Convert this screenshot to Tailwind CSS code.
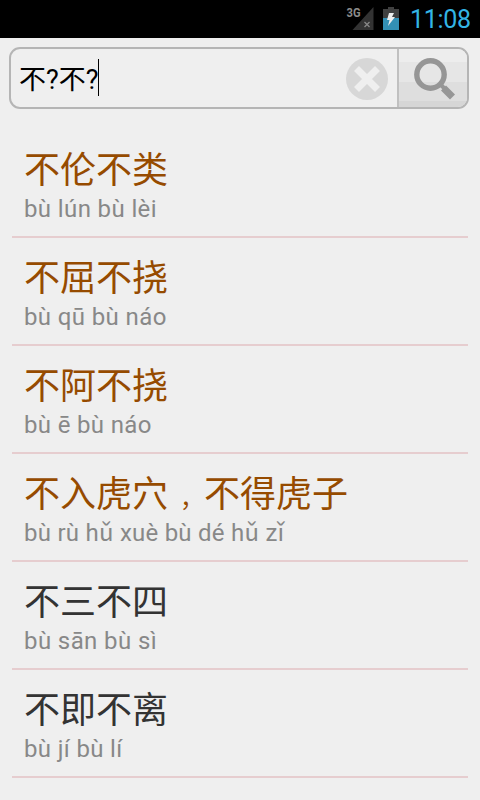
<!DOCTYPE html>
<html lang="zh-CN">
<head>
    <meta charset="UTF-8">
    <meta name="viewport" content="width=device-width, initial-scale=1.0">
    <title>成语</title>
    <script src="https://cdn.jsdelivr.net/npm/@tailwindcss/browser@4"></script>
    <style>
        body {
            font-family: Roboto, "Noto Sans CJK SC", sans-serif;
        }
    </style>
</head>
<body class="bg-[#efefef] h-[800px] overflow-hidden">
    <!-- Status bar -->
    <div class="h-[38px] bg-black flex items-center justify-end pr-[10px]">
        <svg class="w-[29px] h-[38px]" viewBox="0 0 29 38">
            <text x="1.5" y="17" font-size="13.5" font-weight="700" textLength="14" lengthAdjust="spacingAndGlyphs" fill="#8c8c8c">3G</text>
            <path d="M28.5 7V30H7.5Z" fill="#333"/>
            <path d="M19.5 22l5 5M24.5 22l-5 5" stroke="#888" stroke-width="1.3"/>
        </svg>
        <svg class="w-4 h-[38px] ml-[9px] mr-[11px]" viewBox="0 0 16 38">
            <path d="M5 7h6v2h5v9H0V9h5z" fill="#404040"/>
            <path d="M0 18h16v12H0z" fill="#3390b5"/>
            <path d="M6 13h5l-2 4h3l-7 9 1.5-6H4z" fill="#eee"/>
        </svg>
        <span class="text-[25px] leading-[38px] text-[#33b5e5] tracking-[-0.3px] w-[60px] whitespace-nowrap pt-[2px]">11:08</span>
    </div>

    <!-- Search box -->
    <div class="mt-[9px] ml-[9px] w-[460px] h-[62px] flex border-2 border-[#b5b5b5] rounded-[11px] overflow-hidden">
        <div class="flex-1 flex items-center pl-[8px] pr-[9px]">
            <span class="text-[27px] leading-[54px] text-black whitespace-nowrap pt-[3px]">不?不?</span>
            <span class="w-px h-[37px] bg-black -mt-[2px] -ml-px"></span>
            <svg class="w-[42px] h-[42px] ml-auto mt-[2px]" viewBox="0 0 42 42">
                <circle cx="21" cy="21" r="21" fill="#d7d7d7"/>
                <path d="M10.5 10.5l21 21M31.5 10.5l-21 21" stroke="#efefef" stroke-width="7"/>
            </svg>
        </div>
        <div class="w-[70px] border-l-2 border-[#c0c0c0] bg-[linear-gradient(#ededed_0_13px,#e6e6e6_13px_33px,#dedede_33px_52px,#d6d6d6_52px)]">
            <svg class="w-[68px] h-[58px]" viewBox="0 0 68 58">
                <circle cx="31.5" cy="25.5" r="13.7" fill="none" stroke="#969696" stroke-width="5.4"/>
                <path d="M41 35l5 5" stroke="#969696" stroke-width="4"/>
                <path d="M44.5 39l9 9" stroke="#969696" stroke-width="7"/>
            </svg>
        </div>
    </div>

    <!-- Results -->
    <ul class="mt-[21px] mx-3">
        <li class="h-[108px] px-3 pt-[15px] border-b-2 border-[#e6cdcf]">
            <div class="text-[36px] leading-[52px] text-[#964b00]">不伦不类</div>
            <div class="text-[24px] leading-[24px] tracking-[0.38px] text-[#888]">bù lún bù lèi</div>
        </li>
        <li class="h-[108px] px-3 pt-[15px] border-b-2 border-[#e6cdcf]">
            <div class="text-[36px] leading-[52px] text-[#964b00]">不屈不挠</div>
            <div class="text-[24px] leading-[24px] tracking-[0.38px] text-[#888]">bù qū bù náo</div>
        </li>
        <li class="h-[108px] px-3 pt-[15px] border-b-2 border-[#e6cdcf]">
            <div class="text-[36px] leading-[52px] text-[#964b00]">不阿不挠</div>
            <div class="text-[24px] leading-[24px] tracking-[0.34px] text-[#888]">bù ē bù náo</div>
        </li>
        <li class="h-[108px] px-3 pt-[15px] border-b-2 border-[#e6cdcf]">
            <div class="text-[36px] leading-[52px] text-[#964b00]">不入虎穴<span class="pl-[12px] text-[24px] leading-none">，</span>不得虎子</div>
            <div class="text-[24px] leading-[24px] tracking-[0.24px] text-[#888]">bù rù hǔ xuè bù dé hǔ zǐ</div>
        </li>
        <li class="h-[108px] px-3 pt-[15px] border-b-2 border-[#e6cdcf]">
            <div class="text-[36px] leading-[52px] text-[#333]">不三不四</div>
            <div class="text-[24px] leading-[24px] tracking-[0.4px] text-[#888]">bù sān bù sì</div>
        </li>
        <li class="h-[108px] px-3 pt-[15px] border-b-2 border-[#e6cdcf]">
            <div class="text-[36px] leading-[52px] text-[#333]">不即不离</div>
            <div class="text-[24px] leading-[24px] tracking-[0.35px] text-[#888]">bù jí bù lí</div>
        </li>
    </ul>
</body>
</html>
